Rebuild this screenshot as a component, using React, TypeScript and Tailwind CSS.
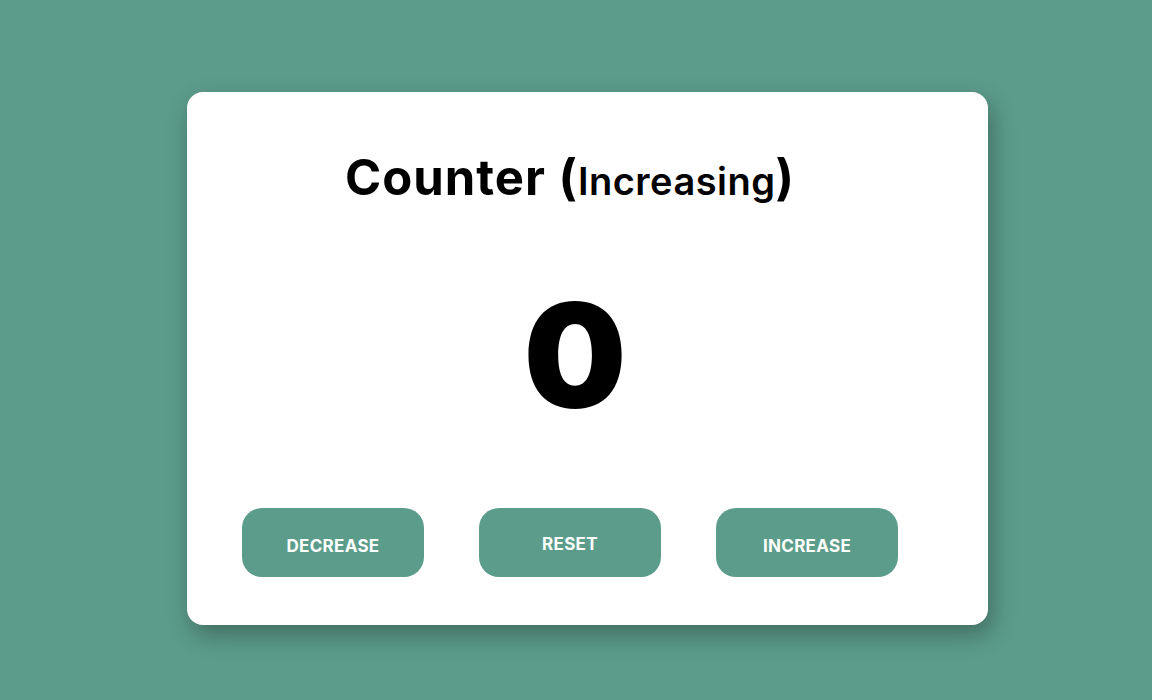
import React from "react";

export default function App() {
  const font = { fontFamily: "Inter, 'Noto Sans', sans-serif" };
  return (
    <div className="w-full h-[700px] bg-[#5c9c8a] pl-[187px] pt-[92px]" style={font}>
      <div className="w-[801px] h-[533px] bg-white rounded-[16px] shadow-[4px_10px_24px_rgba(0,0,0,0.3)] pl-[55px] pt-[50px]">
        <div className="w-[656px] flex flex-col items-center">
          <h1 className="text-[49px] leading-[72px] font-bold text-black tracking-[1px]">
            Counter (<span className="text-[38px] font-semibold tracking-[0.5px]">Increasing</span>)
          </h1>
          <div className="mt-[53px] ml-[10px] h-[170px] flex items-center justify-center text-[145px] font-black leading-none text-black">
            0
          </div>
          <div className="mt-[68px] flex gap-[55px]">
            <button className="w-[182px] h-[69px] rounded-[20px] bg-[#5c9c8a] text-white text-[17px] font-bold tracking-[0.3px] pt-[9px]">DECREASE</button>
            <button className="w-[182px] h-[69px] rounded-[20px] bg-[#5c9c8a] text-white text-[17px] font-bold tracking-[0.3px] pt-[4px]">RESET</button>
            <button className="w-[182px] h-[69px] rounded-[20px] bg-[#5c9c8a] text-white text-[17px] font-bold tracking-[0.3px] pt-[9px]">INCREASE</button>
          </div>
        </div>
      </div>
    </div>
  );
}
